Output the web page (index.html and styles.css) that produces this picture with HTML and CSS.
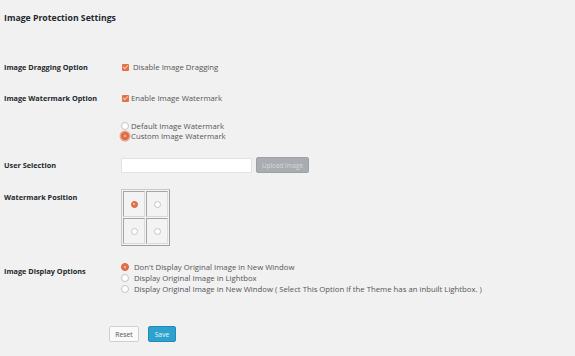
FILE: index.html
```html
<!DOCTYPE html>
<html>
<head>
<meta charset="utf-8">
<link rel="stylesheet" href="styles.css">
</head>
<body>
<div class="page">
  <h1 class="title">Image Protection Settings</h1>

  <div class="row row-drag">
    <div class="label">Image Dragging Option</div>
    <div class="field"><span class="check"></span><span class="txt gap4">Disable Image Dragging</span></div>
  </div>

  <div class="row row-wm">
    <div class="label">Image Watermark Option</div>
    <div class="field"><span class="check"></span><span class="txt gap2">Enable Image Watermark</span></div>
  </div>

  <div class="row row-type">
    <div class="label"></div>
    <div class="list tight">
      <div class="opt"><span class="radio"></span><span class="txt gap2">Default Image Watermark</span></div>
      <div class="opt"><span class="radio on focus"></span><span class="txt gap2">Custom Image Watermark</span></div>
    </div>
  </div>

  <div class="row row-user">
    <div class="label mid">User Selection</div>
    <div class="field">
      <span class="input"></span>
      <span class="btn-upload">Upload Image</span>
    </div>
  </div>

  <div class="row row-pos">
    <div class="label pos-label">Watermark Position</div>
    <div class="pos-grid">
      <span class="cell"><span class="radio on"></span></span>
      <span class="cell"><span class="radio"></span></span>
      <span class="cell"><span class="radio"></span></span>
      <span class="cell"><span class="radio"></span></span>
    </div>
  </div>

  <div class="row row-display">
    <div class="label disp-label">Image Display Options</div>
    <div class="list">
      <div class="opt"><span class="radio on"></span><span class="txt gap5">Don't Display Original Image in New Window</span></div>
      <div class="opt"><span class="radio"></span><span class="txt gap5">Display Original Image in Lightbox</span></div>
      <div class="opt"><span class="radio"></span><span class="txt gap5">Display Original Image in New Window ( Select This Option if the Theme has an inbuilt Lightbox. )</span></div>
    </div>
  </div>

  <div class="actions">
    <span class="btn reset">Reset</span>
    <span class="btn save">Save</span>
  </div>
</div>
</body>
</html>
```

FILE: styles.css
```css
html, body {
  margin: 0;
  padding: 0;
  background: #f1f1f1;
}
body {
  font-family: "Open Sans", "Liberation Sans", sans-serif;
  color: #444;
  width: 575px;
  height: 356px;
  overflow: hidden;
}
.page {
  padding: 11px 0 0 4px;
}
.title {
  margin: 0;
  font-size: 8.7px;
  line-height: 14px;
  font-weight: 700;
  color: #23282d;
}
.row {
  display: grid;
  grid-template-columns: 117px auto;
  align-items: start;
}
.label {
  font-size: 7.3px;
  line-height: 12px;
  font-weight: 700;
  color: #23282d;
}
.field {
  display: flex;
  align-items: center;
  height: 12px;
  color: #555;
}
.txt {
  font-size: 7.75px;
  color: #555;
  white-space: nowrap;
}
.gap2 { margin-left: 2px; }
.gap4 { margin-left: 4px; }
.gap5 { margin-left: 5px; }

.row-drag { margin-top: 36px; }
.row-wm { margin-top: 19px; }
.row-type { margin-top: 17px; }
.row-user { margin-top: 16px; }
.row-pos { margin-top: 16px; }
.row-display { margin-top: 15px; }

.check {
  width: 7px;
  height: 7px;
  margin-left: 1px;
  border-radius: 1px;
  background: #e2714c;
  position: relative;
  flex: none;
}
.check::after {
  content: "";
  position: absolute;
  left: 2px;
  top: 0px;
  width: 2px;
  height: 4px;
  border: solid #f6c8b4;
  border-width: 0 1px 1px 0;
  transform: rotate(45deg);
}

.list {
  display: flex;
  flex-direction: column;
}
.opt {
  display: flex;
  align-items: center;
  height: 11px;
}
.tight .opt { height: 10px; }

.radio {
  width: 6px;
  height: 6px;
  border-radius: 50%;
  border: 1px solid #c4c4c4;
  background: #fff;
  flex: none;
  position: relative;
  box-sizing: content-box;
}
.radio.on {
  background: #e2714c;
  border-color: #d9653f;
}
.radio.on::after {
  content: "";
  position: absolute;
  left: 2px;
  top: 2px;
  width: 2px;
  height: 2px;
  border-radius: 50%;
  background: #f7c9b6;
}
.radio.focus {
  box-shadow: 0 0 0 1.5px #e8a58c;
}

.label.mid {
  margin-top: 2px;
}
.row-user .field {
  height: 16px;
}
.input {
  width: 131px;
  height: 15px;
  background: #fff;
  border: 1px solid #e2e2e2;
  box-sizing: border-box;
  display: block;
}
.btn-upload {
  margin-left: 4px;
  width: 53px;
  height: 16px;
  box-sizing: border-box;
  background: #a9adb1;
  border: 1px solid #9da1a5;
  color: #d6d8da;
  font-size: 6.3px;
  display: flex;
  align-items: center;
  justify-content: center;
  border-radius: 2px;
}

.pos-label {
  margin-top: 2px;
}
.pos-grid {
  width: 49px;
  height: 57px;
  box-sizing: border-box;
  border: 1px solid #c8c8c8;
  border-right-color: #9e9e9e;
  border-bottom-color: #9e9e9e;
  padding: 1px;
  display: grid;
  grid-template-columns: 1fr 1fr;
  grid-template-rows: 1fr 1fr;
  gap: 1px;
  background: #f4f4f4;
}
.cell {
  border: 1px solid #a5a5a5;
  border-right-color: #dadada;
  border-bottom-color: #dadada;
  display: flex;
  align-items: center;
  justify-content: center;
  background: #f3f3f3;
}
.cell .radio {
  width: 5px;
  height: 5px;
}
.cell .radio.on::after {
  left: 1.5px;
  top: 1.5px;
}

.disp-label {
  margin-top: 4px;
}

.actions {
  margin-top: 32px;
  margin-left: 105px;
  display: flex;
  gap: 9px;
}
.btn {
  height: 16px;
  box-sizing: border-box;
  font-size: 6.8px;
  display: flex;
  align-items: center;
  justify-content: center;
  border-radius: 2px;
}
.reset {
  width: 30px;
  background: #fafafa;
  border: 1px solid #d0d0d0;
  color: #555;
}
.save {
  width: 28px;
  background: #2ea2cc;
  border: 1px solid #1e8cbe;
  color: #e9f5fa;
}
```
